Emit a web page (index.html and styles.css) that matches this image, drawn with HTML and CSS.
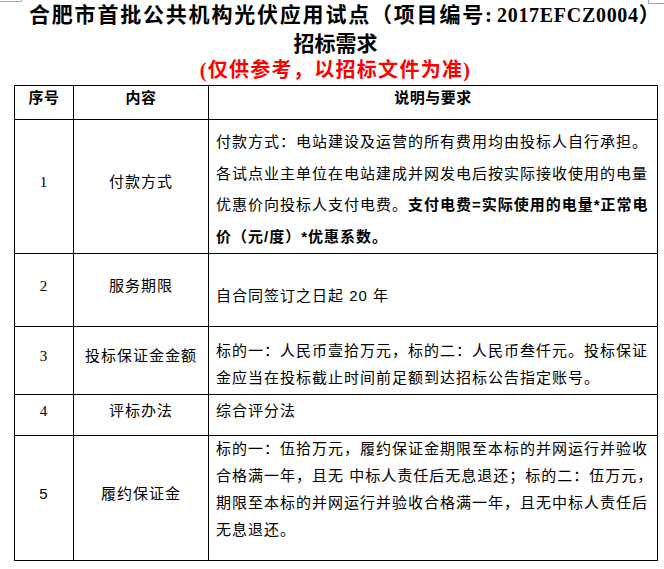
FILE: index.html
```html
<!DOCTYPE html>
<html lang="zh-CN">
<head>
<meta charset="utf-8">
<title>招标需求</title>
<link rel="stylesheet" href="styles.css">
</head>
<body>
<div class="page">
  <span class="mark mark-tl"></span>
  <span class="mark mark-tr"></span>
  <div class="doc">
    <h1 class="t1">合肥市首批公共机构光伏应用试点（项目编号<span class="colon">:</span><span class="code">2017EFCZ0004</span>）</h1>
    <h2 class="t2">招标需求</h2>
    <p class="t3">(仅供参考，以招标文件为准)</p>
    <table class="req">
      <colgroup>
        <col class="c1">
        <col class="c2">
        <col class="c3">
      </colgroup>
      <thead>
        <tr class="rh">
          <th class="hd">序号</th>
          <th class="hd">内容</th>
          <th class="hd">说明与要求</th>
        </tr>
      </thead>
      <tbody>
        <tr class="r1">
          <td class="num serif">1</td>
          <td class="name">付款方式</td>
          <td class="desc d1">
            <span class="ln jl">付款方式：电站建设及运营的所有费用均由投标人自行承担。</span>
            <span class="ln jl">各试点业主单位在电站建成并网发电后按实际接收使用的电量</span>
            <span class="ln jl">优惠价向投标人支付电费。<b>支付电费=实际使用的电量*正常电</b></span>
            <span class="ln"><b>价（元/度）*优惠系数。</b></span>
          </td>
        </tr>
        <tr class="r2">
          <td class="num serif">2</td>
          <td class="name">服务期限</td>
          <td class="desc d2"><span class="ln">自合同签订之日起 20 年</span></td>
        </tr>
        <tr class="r3">
          <td class="num serif">3</td>
          <td class="name">投标保证金金额</td>
          <td class="desc d3">
            <span class="ln jl">标的一：人民币壹拾万元，标的二：人民币叁仟元。投标保证</span>
            <span class="ln">金应当在投标截止时间前足额到达招标公告指定账号。</span>
          </td>
        </tr>
        <tr class="r4">
          <td class="num serif">4</td>
          <td class="name">评标办法</td>
          <td class="desc d4"><span class="ln">综合评分法</span></td>
        </tr>
        <tr class="r5">
          <td class="num">5</td>
          <td class="name">履约保证金</td>
          <td class="desc d5">
            <div class="lines">
              <span class="ln jl">标的一：伍拾万元，履约保证金期限至本标的并网运行并验收</span>
              <span class="ln jl">合格满一年，且无 中标人责任后无息退还；标的二：伍万元，</span>
              <span class="ln jl">期限至本标的并网运行并验收合格满一年，且无中标人责任后</span>
              <span class="ln">无息退还。</span>
            </div>
          </td>
        </tr>
      </tbody>
    </table>
  </div>
</div>
</body>
</html>
```
FILE: styles.css
```css
html, body {
  margin: 0;
  padding: 0;
  background: #ffffff;
}

th, td {
  padding: 0;
}

.page {
  position: relative;
  width: 664px;
  height: 569px;
  overflow: hidden;
  color: #000000;
}

.mark {
  position: absolute;
  display: block;
  border-color: #a8a8a8;
  border-style: solid;
  border-width: 0;
}

.mark-tl {
  left: 0;
  top: 0;
  width: 21px;
  height: 1px;
  border-right-width: 1px;
  border-bottom-width: 1px;
}

.mark-tr {
  left: 648px;
  top: 0;
  width: 16px;
  height: 3px;
  border-left-width: 1px;
  border-bottom-width: 1px;
}

.doc {
  margin-left: 14px;
  width: 643px;
  padding-top: 1px;
}

.t1 {
  margin: 0;
  padding-left: 15px;
  text-align: center;
  font: 700 21px/28px "Liberation Serif", "Noto Sans CJK SC", serif;
  letter-spacing: 1.8px;
  white-space: nowrap;
}

.t1 .colon {
  letter-spacing: 5px;
}

.t1 .code {
  font-size: 20px;
  letter-spacing: 0.7px;
}

.t2 {
  margin: 0;
  text-align: center;
  font: 700 21px/27px "Noto Sans CJK SC", sans-serif;
}

.t3 {
  margin: 0;
  text-align: center;
  color: #ff0000;
  font: 700 20px/28px "Liberation Serif", "Noto Sans CJK SC", serif;
  letter-spacing: 1.3px;
}

.req {
  margin-top: 1px;
  border-collapse: collapse;
  table-layout: fixed;
  width: 643px;
  font: 400 15px "Liberation Sans", "Noto Sans CJK SC", sans-serif;
  letter-spacing: 1px;
}

.c1 { width: 59px; }
.c2 { width: 135px; }
.c3 { width: 449px; }

.hd,
.num,
.name,
.desc {
  border: 1px solid #000000;
}

.rh { height: 34px; }
.r1 { height: 134px; }
.r2 { height: 73px; }
.r3 { height: 68px; }
.r4 { height: 41px; }
.r5 { height: 125px; }

.hd {
  font-weight: 700;
  letter-spacing: 0.5px;
  text-align: center;
  vertical-align: middle;
  padding-bottom: 10px;
  line-height: 20px;
}

.num,
.name {
  text-align: center;
  vertical-align: middle;
  padding-bottom: 9px;
  line-height: 20px;
}

.num.serif {
  font-family: "Liberation Serif", serif;
}

.desc {
  padding-left: 7px;
  padding-right: 9px;
  text-align: left;
}

.ln {
  display: block;
  white-space: nowrap;
}

.jl {
  text-align: justify;
  text-align-last: justify;
}

.desc b {
  font-weight: 700;
}

.d1 {
  vertical-align: top;
  padding-top: 6px;
  line-height: 31.7px;
}

.d2 {
  vertical-align: middle;
  padding-top: 11px;
  line-height: 20px;
}

.d3 {
  vertical-align: top;
  padding-top: 9.5px;
  line-height: 27px;
}

.d4 {
  vertical-align: middle;
  padding-bottom: 9px;
  line-height: 20px;
}

.d5 {
  vertical-align: top;
  line-height: 27px;
}

.d5 .lines {
  margin-top: -1.5px;
}
```
